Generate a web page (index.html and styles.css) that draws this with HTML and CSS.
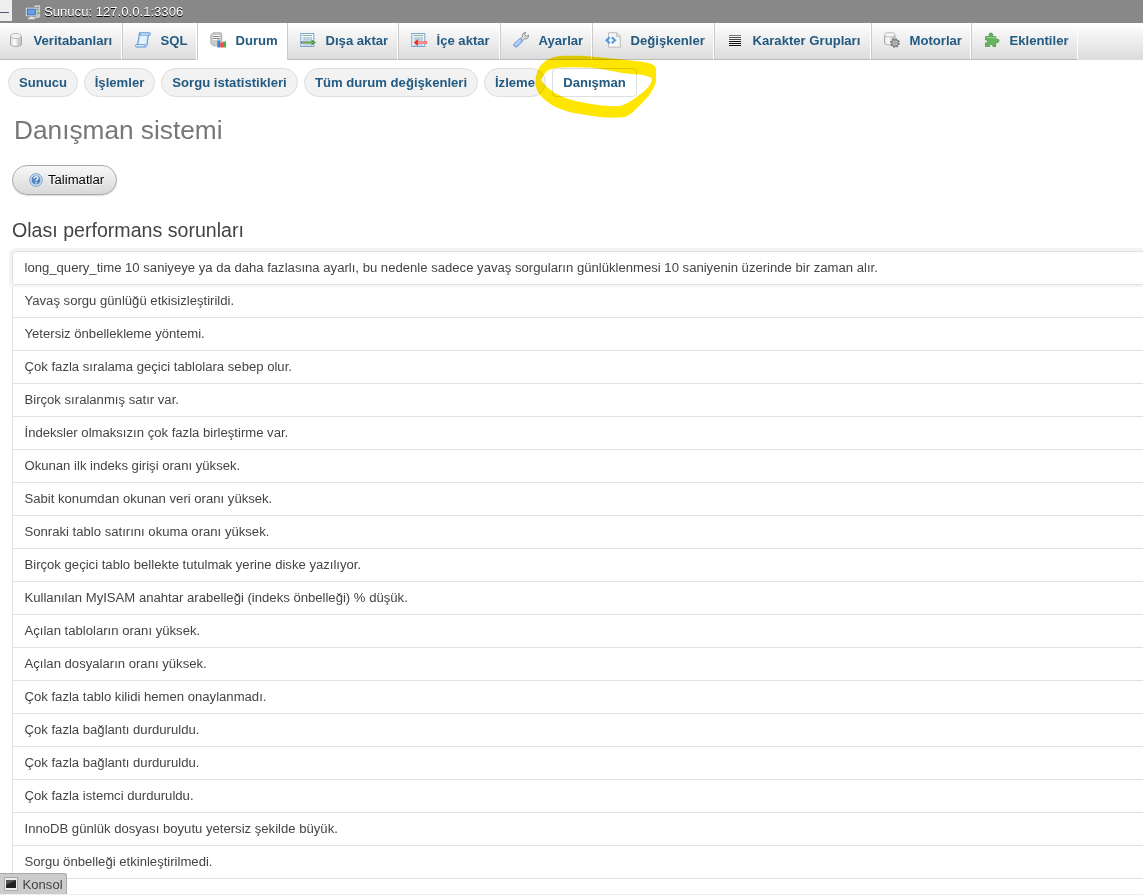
FILE: index.html
```html
<!DOCTYPE html>
<html lang="tr">
<head>
<meta charset="utf-8">
<title>Danışman sistemi</title>
<link rel="stylesheet" href="styles.css">
</head>
<body>
<header class="server">
  <span class="collapse"><i></i></span>
  <svg class="icon" viewBox="0 0 16 16"><path d="M8.500 2l2-1.300h5v12.300l-2 1.500h-5z" fill="#c9c9c9" stroke="#777" stroke-width=".6"/><path d="M10 3.500h4M10 5.500h4" stroke="#999"/><path d="M12.800 8h1.700v2h-1.700z" fill="#55b947"/><rect x=".8" y="3.500" width="11" height="9" rx=".6" fill="#e9edf2" stroke="#8791a0" stroke-width=".7"/><rect x="2.300" y="5" width="8" height="6" fill="#6c9be0" stroke="#315fa8" stroke-width=".8"/><path d="M5 12.800h3v1h2v1.500H3v-1.500h2z" fill="#e5e5e5"/></svg>
  <span class="server-name">Sunucu: 127.0.0.1:3306</span>
</header>
<nav class="tabs">
  <a class="tab t1"><svg class="icon" viewBox="0 0 16 16"><defs><linearGradient id="cyl"><stop stop-color="#ddd"/><stop offset=".4" stop-color="#fff"/><stop offset=".6" stop-color="#ddd"/><stop offset="1" stop-color="#bbb"/></linearGradient></defs><path d="M2.500 4v8c0 3.300 11 3.300 11 0V4" fill="url(#cyl)" stroke="#aaa"/><ellipse cx="8" cy="4" rx="5.500" ry="2.500" fill="#f2f2f2" stroke="#bbb"/></svg><span>Veritabanları</span></a>
  <a class="tab t2"><svg class="icon" viewBox="0 0 16 16"><path d="M4.300.8h10.500c1 .6.800 2.200-.5 2.400h-1L12 12.800c-.2 1.300-.8 2.200-2 2.200H1.300C0 14.500.2 12.800 1.500 12.500h1L4.200 3z" fill="#d5e7fb" stroke="#4a86cc" stroke-width=".9"/><path d="M4.800 1c1 .3.700 1.700.2 2.200h9M2.200 12.500h8c-.6.700-.6 1.700 0 2.300" fill="none" stroke="#5b95d7" stroke-width=".8"/><path d="M5.600 5h5.800M5.200 7h5.800M4.900 9h5.800M4.600 11h5.500" stroke="#f5faff"/></svg><span>SQL</span></a>
  <a class="tab active t3"><svg class="icon" viewBox="0 0 16 16"><path d="M3 .8h8l.8 1.500v11.500H3L.8 11.500V3z" fill="#ccc" stroke="#999" stroke-width=".7"/><path d="M3 3.500h6.500M3 5.500h6.500M3 7.500h4" stroke="#fff"/><path d="M3 4.500h6.500M3 6.500h6.500" stroke="#888"/><path d="M7.300 8.500h2.900v7H7.300z" fill="#3686e8"/><path d="M10.200 10.500h2.800v5h-2.800z" fill="#ef4b3e"/><path d="M13 9.500h3v6h-3z" fill="#42b744"/></svg><span>Durum</span></a>
  <a class="tab t4"><svg class="icon" viewBox="0 0 16 16"><rect x=".8" y="1.500" width="13" height="13" fill="#f6fafe" stroke="#79a3d7"/><path d="M2.500 3.500h9.500" stroke="#83b77b"/><path d="M2.500 6h9.500M2.500 8h9.500M2.500 13h9.500" stroke="#9cb3cf"/><path d="M5 5v3M8 5v3M11 5v3" stroke="#9cb3cf" stroke-width=".6"/><path d="M1 10.500h11" stroke="#347e31" stroke-width="2"/><path d="M11.500 7.500L16 10.500l-4.500 3z" fill="#479542"/><path d="M2 10.500h12" stroke="#91cc7d" stroke-width=".5"/></svg><span>Dışa aktar</span></a>
  <a class="tab t5"><svg class="icon" viewBox="0 0 16 16"><rect x=".8" y="1.500" width="13" height="13" fill="#f6fafe" stroke="#79a3d7"/><path d="M2.500 3.500h9.500" stroke="#83b77b"/><path d="M2.500 6h9.500M2.500 8h9.500M2.500 13h9.500" stroke="#9cb3cf"/><path d="M5 5v3M8 5v3M11 5v3" stroke="#9cb3cf" stroke-width=".6"/><path d="M6 10.500h10" stroke="#ed5149" stroke-width="2.400"/><path d="M7 7L2.500 10.500 7 14z" fill="#f02f2b"/><path d="M7 10.500h8" stroke="#ffc0b8" stroke-width=".7"/></svg><span>İçe aktar</span></a>
  <a class="tab t6"><svg class="icon" viewBox="0 0 16 16"><path d="M7.500 6.500L9.300 4.800c-.5-2.300 1-4.300 3.400-4.400l-1.200 2.500 1.600 1.500 2.500-1.200c.2 2.600-1.800 4.300-4.200 3.600L9.500 8.700z" fill="#ddd" stroke="#777" stroke-width=".8"/><path d="M7.200 6.300l2.700 2.700-5.400 5.500c-2 1.600-4.900-.9-3.200-3z" fill="#9fc0f2" stroke="#5f88cf" stroke-width=".8"/><path d="M7 8l-4.500 4.600" stroke="#c8ddfc" stroke-width="1.300"/></svg><span>Ayarlar</span></a>
  <a class="tab t7"><svg class="icon" viewBox="0 0 16 16"><path d="M3.500.7h8.300l3.500 3.500v11H3.500z" fill="#f5f5f5" stroke="#bbb"/><path d="M11.500 1v3.500H15" fill="#ddd" stroke="#bbb" stroke-width=".8"/><path d="M4.700 5.200L1.500 8.200l3.200 3M6.800 5.200L10 8.200l-3.200 3" fill="none" stroke="#4e96e1" stroke-width="2"/></svg><span>Değişkenler</span></a>
  <a class="tab t8"><svg class="icon" viewBox="0 0 16 16"><path d="M2 3.500h12" stroke="#777"/><path d="M2 5.500h12" stroke="#555"/><path d="M2 7.500h12" stroke="#444"/><path d="M2 9.500h12M2 11.500h12M2 13.500h12" stroke="#111"/></svg><span>Karakter Grupları</span></a>
  <a class="tab t9"><svg class="icon" viewBox="0 0 16 16"><path d="M.5 2.800v8c0 2.800 10.500 2.800 10.500 0v-8" fill="url(#cyl)" stroke="#aaa"/><ellipse cx="5.750" cy="2.800" rx="5.250" ry="2.200" fill="#f4f4f4" stroke="#bbb"/><circle cx="11" cy="11" r="3.900" fill="#999" stroke="#777" stroke-width="2" stroke-dasharray="1.500 1.560"/><circle cx="11" cy="11" r="3" fill="#ccc" stroke="#888"/><circle cx="11" cy="11" r="1.200" fill="#eee" stroke="#666" stroke-width=".7"/></svg><span>Motorlar</span></a>
  <a class="tab t10"><svg class="icon" viewBox="0 0 16 16"><path d="M1.500 4.500h4c-1.200-2-.2-3.500 1.400-3.500s2.600 1.500 1.400 3.500h3.400v3c1.800-1 3.300-.2 3.300 1.300s-1.500 2.400-3.300 1.300v4.400H8.900c.8-2.800-4.200-2.800-3.400 0h-4v-3.700c2.800.8 2.800-3.600 0-2.800z" fill="#65b45f" stroke="#3c963b" stroke-width=".7"/><path d="M2.300 5.500h8.500v2" fill="none" stroke="#9bd18c"/></svg><span>Eklentiler</span></a>
</nav>
<nav class="subtabs">
  <a class="pill p1">Sunucu</a><a class="pill p2">İşlemler</a><a class="pill p3">Sorgu istatistikleri</a><a class="pill p4">Tüm durum değişkenleri</a><a class="pill p5">İzleme</a><a class="pill current">Danışman</a>
  <svg class="marker" viewBox="530 50 130 72"><path fill-rule="evenodd" d="M535.500 82C536 69 542 59 558 56.300C570 55.400 585 56 597 57C614 59 642 60.800 650 63.500Q656 65 656 69V81C655 88 648 98 640 105C635 110 630 116 624 117Q607 119 586 115C569 113 554 108 545 100C538 94 535.500 89 535.500 82ZM541 80C545 86 553 93 563 97C576 102 591 104 602 105.500Q616 107 622 105.500C631 102 638 96 643 92C649 87 653 81 651.500 78C643 73 633 75 622 73C609 70.500 597 67 577 67.200C565 67 552 67 547 71Q543 75 541 80Z"/></svg>
</nav>
<main>
  <h1>Danışman sistemi</h1>
  <button class="help"><svg viewBox="0 0 16 16"><circle cx="8" cy="8" r="7.200" fill="#c9ddf2" stroke="#6797cb"/><circle cx="8" cy="8" r="5.600" fill="#5186c1" stroke="#fff" stroke-width=".7"/><path d="M5.800 6.300c.1-3 4.800-2.700 4.400 0-.2 1.200-2.100 1.300-2.100 2.800M8.100 10.300v1.700" fill="none" stroke="#fff" stroke-width="1.500"/></svg><span>Talimatlar</span></button>
  <h2>Olası performans sorunları</h2>
  <div class="issues">
    <div class="issue first">long_query_time 10 saniyeye ya da daha fazlasına ayarlı, bu nedenle sadece yavaş sorguların günlüklenmesi 10 saniyenin üzerinde bir zaman alır.</div>
    <div class="issue">Yavaş sorgu günlüğü etkisizleştirildi.</div>
    <div class="issue">Yetersiz önbellekleme yöntemi.</div>
    <div class="issue">Çok fazla sıralama geçici tablolara sebep olur.</div>
    <div class="issue">Birçok sıralanmış satır var.</div>
    <div class="issue">İndeksler olmaksızın çok fazla birleştirme var.</div>
    <div class="issue">Okunan ilk indeks girişi oranı yüksek.</div>
    <div class="issue">Sabit konumdan okunan veri oranı yüksek.</div>
    <div class="issue">Sonraki tablo satırını okuma oranı yüksek.</div>
    <div class="issue">Birçok geçici tablo bellekte tutulmak yerine diske yazılıyor.</div>
    <div class="issue">Kullanılan MyISAM anahtar arabelleği (indeks önbelleği) % düşük.</div>
    <div class="issue">Açılan tabloların oranı yüksek.</div>
    <div class="issue">Açılan dosyaların oranı yüksek.</div>
    <div class="issue">Çok fazla tablo kilidi hemen onaylanmadı.</div>
    <div class="issue">Çok fazla bağlantı durduruldu.</div>
    <div class="issue">Çok fazla bağlantı durduruldu.</div>
    <div class="issue">Çok fazla istemci durduruldu.</div>
    <div class="issue">InnoDB günlük dosyası boyutu yetersiz şekilde büyük.</div>
    <div class="issue">Sorgu önbelleği etkinleştirilmedi.</div>
    <div class="issue"></div>
  </div>
</main>
<footer class="console"><div class="console-tab"><svg viewBox="0 0 14 14"><rect x=".5" y=".5" width="13" height="13" fill="#eee" stroke="#aaa"/><path d="M2 3h10v8H2z" fill="#222"/><path d="M2 3h10L2 8z" fill="#555"/></svg><span>Konsol</span></div></footer>
</body>
</html>
```
FILE: styles.css
```css
* { box-sizing: border-box; }
body { margin: 0; height: 895px; overflow: hidden; background: #fff; color: #444; font: 13.12px/18px "Liberation Sans", Arial, sans-serif; position: relative; }
.icon { width: 16px; height: 16px; flex: none; }
.server { height: 23px; background: #888; display: flex; align-items: flex-start; color: #fff; }
.collapse { width: 12px; height: 21px; background: #eee; padding-top: 12px; margin-right: 13px; }
.collapse i { display: block; width: 9px; height: 1px; background: #557; }
.server .icon { margin-top: 4px; }
.server-name { margin: 3px 0 0 3px; line-height: 17px; text-shadow: 0 1px 0 #000; white-space: nowrap; }
.tabs { height: 37px; display: flex; background: linear-gradient(#fff, #dcdcdc); border-bottom: 1px solid #ddd; }
.tab { height: 37px; display: flex; align-items: flex-start; padding: 9px 0 0 12px; border-left: 1px solid #ccc; border-right: 1px solid #fff; border-bottom: 1px solid #bbb; font-weight: bold; color: #235a81; white-space: nowrap; flex: none; }
.tab span { margin-left: 9.500px; }
.tab.active { background: #fff; border-color: #fff #fff #fff #ccc; }
.t1 { width: 122px; padding-left: 8px; border-left: 0; }
.t2 { width: 75px; }
.t3 { width: 90px; }
.t4 { width: 111px; }
.t5 { width: 102px; }
.t6 { width: 92px; }
.t7 { width: 122px; }
.t8 { width: 157px; }
.t9 { width: 100px; }
.t10 { width: 107px; }
.subtabs { position: relative; height: 50px; padding: 8px 0 0 8px; display: flex; gap: 6px; }
.pill { height: 29px; border: 1px solid #ddd; border-radius: 15px; background: #f2f2f2; color: #235a81; font-weight: bold; line-height: 27px; text-align: center; white-space: nowrap; flex: none; }
.p1 { width: 70px; }
.p2 { width: 71px; }
.p3 { width: 137px; }
.p4 { width: 174px; }
.p5 { width: 62px; }
.current { width: 85px; border-radius: 4px; background: #fff; }
.marker { position: absolute; left: 530px; top: -10px; width: 130px; height: 72px; fill: #ffe600; mix-blend-mode: multiply; }
main { padding-left: 12px; }
h1 { margin: 0 0 0 2px; height: 55px; padding-top: 4px; font-size: 26.24px; line-height: 32px; font-weight: normal; color: #777; white-space: nowrap; }
.help { display: flex; align-items: center; width: 105px; height: 30px; margin: 0; padding: 0 0 0 16px; border: 1px solid #aaa; border-radius: 15px; background: linear-gradient(#f8f8f8, #d8d8d8); box-shadow: 0 1px 1px #ddd; color: #000; font: 13.12px/18px "Liberation Sans", Arial, sans-serif; text-shadow: 0 1px 0 #fff; }
.help svg { width: 14px; height: 14px; flex: none; }
.help span { margin-left: 5px; white-space: nowrap; }
h2 { margin: 0; height: 56px; padding-top: 22px; font-size: 19.600px; line-height: 26px; font-weight: normal; color: #444; white-space: nowrap; }
.issues { border-left: 1px solid #dee2e6; }
.issue { height: 33px; padding: 7px 0 0 11.500px; border-top: 1px solid #dee2e6; white-space: nowrap; }
.first { margin-left: -1px; border-left: 1px solid #dee2e6; border-radius: 4px 0 0 0; box-shadow: 0 0 0 3px #f4f4f4; }
.console { position: absolute; left: 0; right: 0; bottom: 0; height: 22px; border-bottom: 1px solid #eee; }
.console-tab { width: 67px; height: 21px; background: #ccc; border: solid #aaa; border-width: 1px 1px 0 0; border-radius: 0 3px 0 0; display: flex; align-items: center; padding-left: 4px; }
.console-tab svg { width: 14px; height: 14px; flex: none; }
.console-tab span { margin-left: 4.500px; position: relative; top: 1px; }
```
